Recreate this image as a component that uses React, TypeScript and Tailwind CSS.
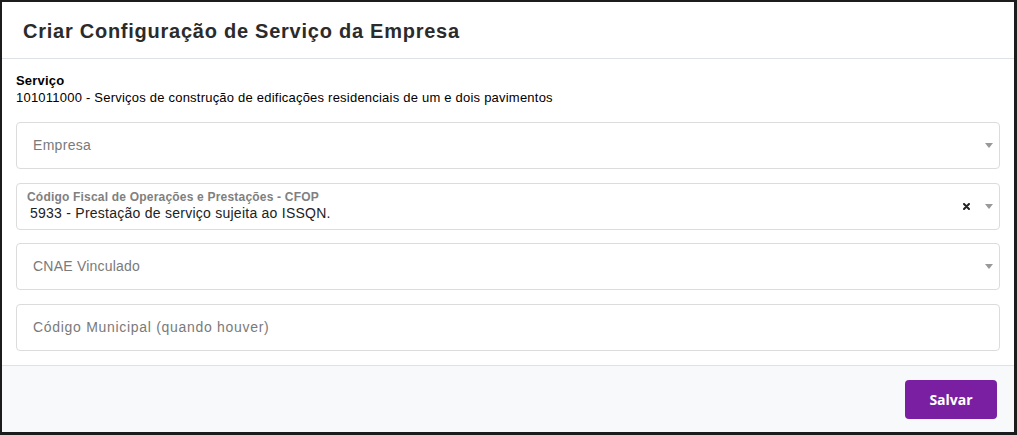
import React from "react";

const Caret = () => (
  <svg width="8" height="5" viewBox="0 0 8 5" className="shrink-0">
    <path d="M0 0 L8 0 L4 5 Z" fill="#999" />
  </svg>
);

const Clear = () => (
  <svg width="7" height="7" viewBox="0 0 7 7" className="shrink-0">
    <path d="M1 1 L6 6 M6 1 L1 6" stroke="#222" strokeWidth="2" strokeLinecap="round" />
  </svg>
);

export default function App() {
  return (
    <div className="w-[1017px] h-[435px] bg-[#1c1c1c] pt-[2px] pl-[2px] pr-[3px] pb-[3px] font-['Liberation_Sans',Arial,sans-serif]">
      <div className="w-full h-full bg-white flex flex-col">
        <div className="h-[57px] border-b border-[#dee2e6] flex items-center pl-[21px]">
          <h1 className="text-[20px] font-bold text-[#2b2b2b] leading-none tracking-[0.75px] pt-[2px]">
            Criar Configuração de Serviço da Empresa
          </h1>
        </div>
        <div className="flex-1 px-[14px] pt-[13px]">
          <div className="text-[13px] leading-[17px] text-black">
            <div className="font-bold tracking-[0.2px]">Serviço</div>
            <div className="tracking-[0.22px]">101011000 - Serviços de construção de edificações residenciais de um e dois pavimentos</div>
          </div>
          <div className="mt-[16px] flex flex-col">
            <div className="h-[47px] border border-[#dcdcdc] rounded-[4px] flex items-center pl-[16px] pr-[6px]">
              <span className="flex-1 text-[14px] text-[#7a7a7a] tracking-[0.3px]">Empresa</span>
              <Caret />
            </div>
            <div className="mt-[14px] h-[47px] border border-[#dcdcdc] rounded-[4px] flex items-center pl-[10px] pr-[6px]">
              <div className="flex-1 flex flex-col">
                <span className="text-[12px] font-bold text-[#808080] leading-[13px] tracking-[0.2px]">
                  Código Fiscal de Operações e Prestações - CFOP
                </span>
                <span className="text-[14px] text-[#222] leading-[18px] pl-[3px] tracking-[0.25px]">
                  5933 - Prestação de serviço sujeita ao ISSQN.
                </span>
              </div>
              <div className="flex items-center gap-[15px]">
                <Clear />
                <Caret />
              </div>
            </div>
            <div className="mt-[13px] h-[47px] border border-[#dcdcdc] rounded-[4px] flex items-center pl-[16px] pr-[6px]">
              <span className="flex-1 text-[14px] text-[#7a7a7a] tracking-[0.22px]">CNAE Vinculado</span>
              <Caret />
            </div>
            <div className="mt-[14px] h-[47px] border border-[#dcdcdc] rounded-[4px] flex items-center pl-[16px] pr-[6px]">
              <span className="flex-1 text-[14px] text-[#7a7a7a] tracking-[0.7px]">Código Municipal (quando houver)</span>
            </div>
          </div>
        </div>
        <div className="h-[67px] border-t border-[#dee2e6] bg-[#f8f9fa] flex items-center justify-end pr-[17px]">
          <button className="w-[92px] h-[39px] rounded-[4px] bg-[#7b1fa2] text-white text-[14px] font-bold font-['Open_Sans',sans-serif]">
            Salvar
          </button>
        </div>
      </div>
    </div>
  );
}
